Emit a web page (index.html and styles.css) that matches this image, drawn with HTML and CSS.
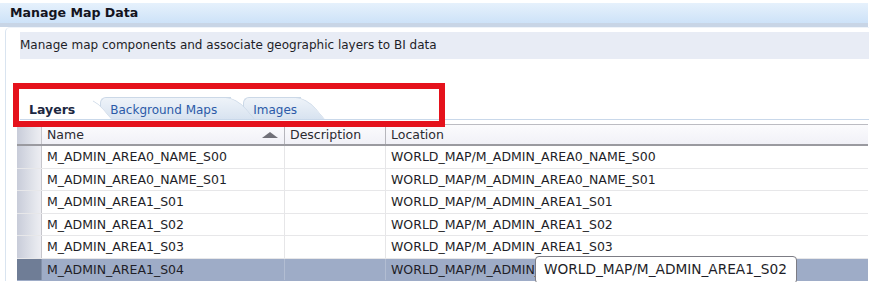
FILE: index.html
```html
<!DOCTYPE html>
<html lang="en">
<head>
    <meta charset="UTF-8">
    <title>Manage Map Data</title>
    <link rel="stylesheet" href="styles.css">
</head>
<body>

    <div class="titlebar">Manage Map Data</div>

    <div class="panel">
        <div class="intro">Manage map components and associate geographic layers to BI data</div>

        <div class="tabs">
            <div class="tab active">Layers</div>
            <div class="tab second">Background Maps</div>
            <div class="tab third">Images</div>
        </div>

        <div class="grid">
            <div class="row head">
                <div class="gutter"></div>
                <div class="cell">Name <span class="sort"></span></div>
                <div class="cell">Description</div>
                <div class="cell">Location</div>
            </div>
            <div class="row">
                <div class="gutter"></div>
                <div class="cell">M_ADMIN_AREA0_NAME_S00</div>
                <div class="cell"></div>
                <div class="cell">WORLD_MAP/M_ADMIN_AREA0_NAME_S00</div>
            </div>
            <div class="row">
                <div class="gutter"></div>
                <div class="cell">M_ADMIN_AREA0_NAME_S01</div>
                <div class="cell"></div>
                <div class="cell">WORLD_MAP/M_ADMIN_AREA0_NAME_S01</div>
            </div>
            <div class="row">
                <div class="gutter"></div>
                <div class="cell">M_ADMIN_AREA1_S01</div>
                <div class="cell"></div>
                <div class="cell">WORLD_MAP/M_ADMIN_AREA1_S01</div>
            </div>
            <div class="row">
                <div class="gutter"></div>
                <div class="cell">M_ADMIN_AREA1_S02</div>
                <div class="cell"></div>
                <div class="cell">WORLD_MAP/M_ADMIN_AREA1_S02</div>
            </div>
            <div class="row">
                <div class="gutter"></div>
                <div class="cell">M_ADMIN_AREA1_S03</div>
                <div class="cell"></div>
                <div class="cell">WORLD_MAP/M_ADMIN_AREA1_S03</div>
            </div>
            <div class="row selected">
                <div class="gutter"></div>
                <div class="cell">M_ADMIN_AREA1_S04</div>
                <div class="cell"></div>
                <div class="cell">WORLD_MAP/M_ADMIN_AREA1_S04</div>
            </div>
        </div>
    </div>

    <!-- annotation and hover tooltip lie over the page -->
    <div class="highlight"></div>
    <div class="tooltip">WORLD_MAP/M_ADMIN_AREA1_S02</div>

</body>
</html>
```

FILE: styles.css
```css
body {
    margin: 0;
    background: #ffffff;
    font-family: "DejaVu Sans", Verdana, sans-serif;
    color: #1e1e28;
    position: relative;
    height: 282px;
    overflow: hidden;
}

.titlebar {
    margin-top: 3px;
    width: 858px;
    height: 20px;
    line-height: 20px;
    padding-left: 10px;
    background: linear-gradient(#e6f1fc, #cde2f8);
    border-bottom: 4px solid #c8d5e6;
    font-weight: bold;
    font-size: 12.6px;
    color: #14141e;
}

.panel {
    margin-left: 5px;
    width: 863px;
    border-left: 1px solid #d9e4f0;
    border-top: 1px solid #eef3f9;
    border-top-left-radius: 5px;
    padding-top: 4px;
}

.intro {
    margin-left: 14px;
    height: 27px;
    line-height: 27px;
    background: #e8ecf5;
    font-size: 12px;
    color: #1e1e28;
}

.tabs {
    display: flex;
    margin-top: 38px;
    margin-left: 14px;
    height: 22px;
    border-bottom: 1px solid #c9d8ea;
}

.tab {
    position: relative;
    display: flex;
    align-items: center;
    height: 22px;
    box-sizing: border-box;
    padding: 3px 38px 0 10px;
    margin-right: -12px;
    font-size: 12px;
    color: #2b5aa8;
}

.tab::before {
    content: "";
    position: absolute;
    top: 0;
    bottom: 0;
    left: 0;
    right: 24px;
    background: linear-gradient(#eef3f9, #d8e3f0);
    border: 1px solid #cbd8e7;
    border-right: none;
    border-bottom: none;
    border-top-left-radius: 6px;
    z-index: -1;
}

.tab::after {
    content: "";
    position: absolute;
    top: 0;
    bottom: 0;
    right: 0;
    width: 32px;
    background: linear-gradient(#eef3f9, #d8e3f0);
    border-top: 1px solid #cbd8e7;
    border-right: 1px solid #cbd8e7;
    border-top-right-radius: 12px;
    transform: skewX(40deg);
    transform-origin: bottom right;
    z-index: -1;
}

.tab.active {
    z-index: 3;
    font-weight: bold;
    font-size: 12.5px;
    color: #1c2742;
    padding-left: 9px;
    padding-right: 37px;
}

.tab.active::before,
.tab.active::after {
    background: #ffffff;
    border-color: #ffffff;
}

.tab.active::after {
    border-right-color: #ccd8e6;
}

.tab.second {
    z-index: 2;
}

.tab.third {
    z-index: 1;
    padding-right: 28px;
}

.grid {
    margin-top: 4px;
    margin-left: 11px;
    width: 851px;
    font-size: 12.5px;
}

.row {
    display: grid;
    grid-template-columns: 25px 243px 101px 482px;
    height: 22.5px;
    box-sizing: border-box;
    border-bottom: 1px solid #e7e7e9;
}

.row .cell {
    display: flex;
    align-items: center;
    padding-left: 5px;
    border-right: 1px solid #e6e6e8;
    white-space: nowrap;
    overflow: hidden;
}

.row .cell:last-child {
    border-right: none;
}

.gutter {
    background: linear-gradient(to right, #c8ccd9, #e6e8ee 80%, #ededf2);
    border-right: 1px solid #c6c6cc;
}

.row.head {
    height: 22px;
    border-top: 1px solid #bcbcc2;
    border-bottom: 2px solid #9a9aa0;
    background: linear-gradient(#fbfbfd, #f1f1f7);
    color: #2a2a30;
}

.row.head .cell {
    border-right: 1px solid #b6b6bc;
}

.row.head .cell:last-child {
    border-right: none;
}

.sort {
    margin-left: auto;
    margin-right: 6px;
    width: 0;
    height: 0;
    border-left: 8px solid transparent;
    border-right: 8px solid transparent;
    border-bottom: 6px solid #707078;
}

.row.selected {
    background: #9eacc7;
    border-bottom-color: #9eacc7;
}

.row.selected .gutter {
    background: #6f7d96;
    border-right-color: #8391aa;
}

.row.selected .cell {
    border-right-color: #b2bdd2;
}

.highlight {
    position: absolute;
    left: 13px;
    top: 83px;
    width: 420px;
    height: 32px;
    border: 6px solid #e5121c;
}

.tooltip {
    position: absolute;
    left: 535px;
    top: 256px;
    height: 26px;
    padding: 0 9px 0 8px;
    line-height: 24px;
    background: #ffffff;
    border: 1px solid #7c7c84;
    border-radius: 4px;
    font-size: 13.7px;
    color: #1e1e28;
}
```
